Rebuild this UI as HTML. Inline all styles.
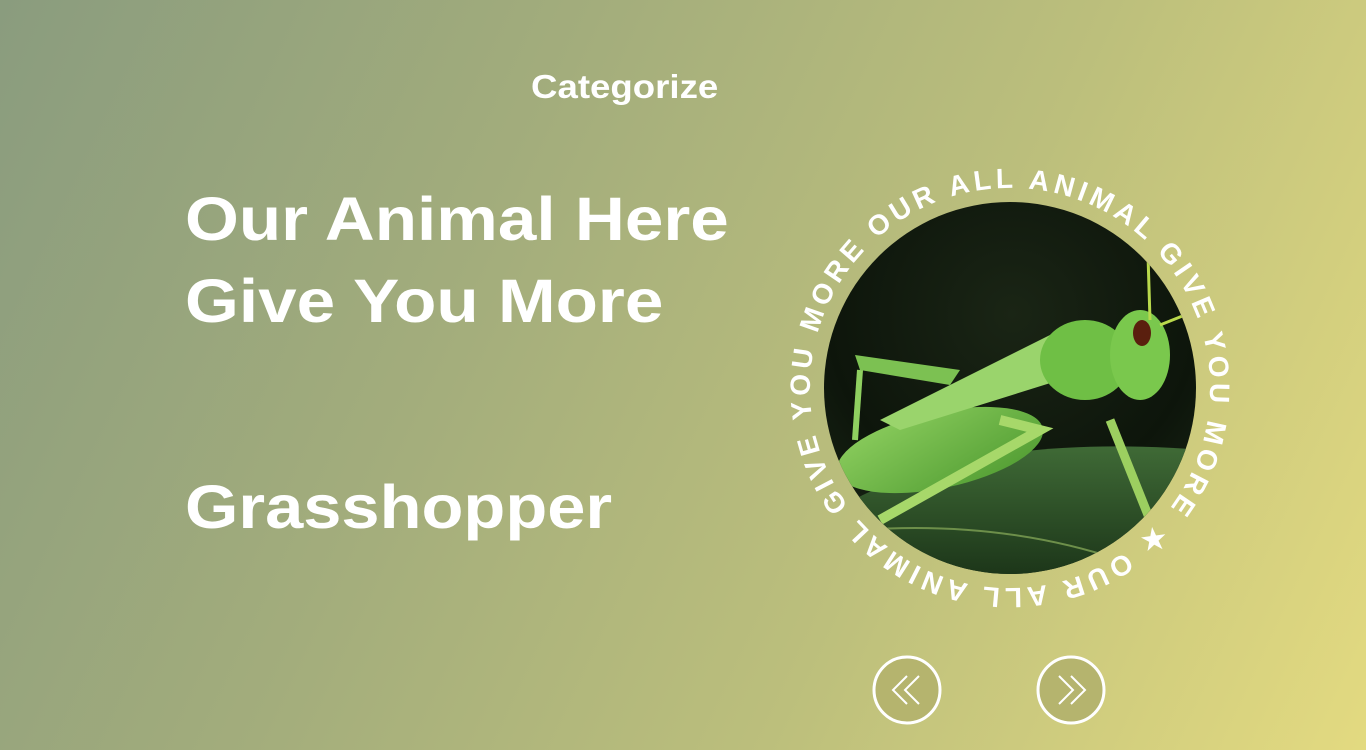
<!DOCTYPE html>
<html><head><meta charset="utf-8"><style>
html,body{margin:0;padding:0}
body{width:1366px;height:750px;overflow:hidden;position:relative;font-family:"Liberation Sans",sans-serif;color:#fff;
background:linear-gradient(115deg,#8a9c7e 0%,#a3ad7c 35%,#bcbf7c 65%,#e3da80 100%);}
.t{position:absolute;font-weight:bold;white-space:nowrap;transform-origin:0 0}
</style></head><body>
<div class="t" style="left:531px;top:68px;font-size:33px;transform:scaleX(1.11)">Categorize</div>
<div class="t" style="left:185px;top:178px;font-size:61px;line-height:82px;transform:scaleX(1.135)">Our Animal Here<br>Give You More</div>
<div class="t" style="left:185px;top:472px;font-size:61px;transform:scaleX(1.125)">Grasshopper</div>
<svg style="position:absolute;left:0;top:0" width="1366" height="750">
<defs>
<clipPath id="c"><circle cx="1010" cy="388" r="186"/></clipPath>
<radialGradient id="bg" cx="0.5" cy="0.3" r="0.8"><stop offset="0" stop-color="#1a2515"/><stop offset="0.6" stop-color="#0d150b"/><stop offset="1" stop-color="#1c2a18"/></radialGradient>
<linearGradient id="leaf" x1="0" y1="0" x2="0" y2="1"><stop offset="0" stop-color="#3f6a36"/><stop offset="1" stop-color="#1b3418"/></linearGradient>
<linearGradient id="body" x1="0" y1="0" x2="1" y2="1"><stop offset="0" stop-color="#8fd060"/><stop offset="1" stop-color="#4e9a30"/></linearGradient>
<path id="ring" d="M1156.3 524.4 A200 200 0 1 1 863.7 251.6 A200 200 0 1 1 1156.3 524.4"/>
</defs>
<g clip-path="url(#c)">
<rect x="820" y="200" width="385" height="380" fill="url(#bg)"/>
<path d="M820 520 Q950 430 1205 450 L1205 580 L820 580Z" fill="url(#leaf)"/>
<path d="M860 530 Q1000 520 1120 560" stroke="#6d8f4a" stroke-width="2" fill="none"/>
<ellipse cx="940" cy="450" rx="105" ry="38" fill="url(#body)" transform="rotate(-12 940 450)"/>
<path d="M880 420 L1050 335 L1060 380 L900 430Z" fill="#9ad46c"/>
<path d="M855 355 L960 370 L950 385 L860 370Z" fill="#7cc152"/>
<ellipse cx="1085" cy="360" rx="45" ry="40" fill="#6fbf45"/>
<ellipse cx="1140" cy="355" rx="30" ry="45" fill="#7ac84d"/>
<ellipse cx="1142" cy="333" rx="9" ry="13" fill="#5a1f0e"/>
<path d="M1000 420 L1040 430 L880 520" stroke="#a7d86a" stroke-width="10" fill="none"/>
<path d="M1110 420 L1150 520" stroke="#9ccf60" stroke-width="9" fill="none"/>
<path d="M860 370 L855 440" stroke="#8fd060" stroke-width="6" fill="none"/>
<path d="M1150 320 L1148 255 M1160 325 L1185 315" stroke="#b9d94c" stroke-width="3" fill="none"/>
</g>
<text font-family="Liberation Sans,sans-serif" font-weight="bold" font-size="28" fill="#fff">
<textPath href="#ring" textLength="1235" lengthAdjust="spacing">★ OUR ALL ANIMAL GIVE YOU MORE OUR ALL ANIMAL GIVE YOU MORE</textPath></text>
<circle cx="907" cy="690" r="33" fill="#b5b46e" stroke="#fff" stroke-width="3"/>
<circle cx="1071" cy="690" r="33" fill="#b5b46e" stroke="#fff" stroke-width="3"/>
<path d="M907 676 L893 690 L907 704 M919 676 L905 690 L919 704" stroke="#fff" stroke-width="2" fill="none"/>
<path d="M1059 676 L1073 690 L1059 704 M1071 676 L1085 690 L1071 704" stroke="#fff" stroke-width="2" fill="none"/>
</svg>
</body></html>
